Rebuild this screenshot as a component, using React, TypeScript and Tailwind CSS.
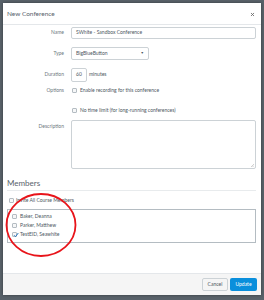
import { X } from "lucide-react";

const font = { fontFamily: "Lato, 'Open Sans', sans-serif" };

function Box({ checked = false }: { checked?: boolean }) {
  return (
    <span className="relative grid h-[5px] w-[5px] shrink-0 place-items-center rounded-[1px] border-[0.5px] border-[#b4bcc2] bg-[#f6f7f8]">
      {checked && (
        <svg viewBox="0 0 6 6" className="absolute -top-[1px] left-0 h-[6px] w-[6px]">
          <path d="M1 3.2 L2.5 4.7 L5.3 1" fill="none" stroke="#2a78bd" strokeWidth="1" />
        </svg>
      )}
    </span>
  );
}

function Row({ label, children, top }: { label: string; children: React.ReactNode; top?: boolean }) {
  return (
    <div className={`grid grid-cols-[61px_1fr] gap-x-[7px] ${top ? "items-start" : "items-center"}`}>
      <div className={`text-right text-[5px] text-[#6e7880] ${top ? "pt-[3px]" : ""}`}>{label}</div>
      <div className="flex items-center">{children}</div>
    </div>
  );
}

export default function App() {
  const members = [
    { name: "Baker, Deanna", checked: false },
    { name: "Parker, Matthew", checked: false },
    { name: "TestEID, Seawhite", checked: true },
  ];
  return (
    <div style={font} className="h-[300px] w-[264px] bg-[#59626a] px-[3px] pt-[3px]">
      <div className="relative flex h-[292px] flex-col bg-white shadow-[0_0_3px_rgba(0,0,0,0.4)]">
        <div className="flex h-[22px] items-center justify-between border-b border-[#e4e7ea] pl-[4px] pr-[6px] pt-[1px]">
          <span className="text-[6.5px] text-[#59636c]">New Conference</span>
          <X className="h-[5px] w-[5px] text-[#666]" strokeWidth={4} />
        </div>

        <div className="flex flex-1 flex-col pr-[5px] pt-[2px]">
          <Row label="Name">
            <div className="flex h-[12px] w-full items-center rounded-[2px] border-[0.5px] border-[#ccd2d6] px-[4px] text-[5px] text-[#4d5862]">
              SWhite - Sandbox Conference
            </div>
          </Row>
          <div className="mt-[8px]">
            <Row label="Type">
              <div className="flex h-[13px] w-[78px] items-center justify-between rounded-[2px] border-[0.5px] border-[#ccd2d6] px-[4px] text-[5px] text-[#4d5862]">
                <span>BigBlueButton</span>
                <span className="text-[3.5px]">▼</span>
              </div>
            </Row>
          </div>
          <div className="mt-[8px]">
            <Row label="Duration">
              <div className="flex h-[14px] w-[16px] items-center justify-center rounded-[2px] border-[0.5px] border-[#ccd2d6] text-[5px] text-[#4d5862]">
                60
              </div>
              <span className="ml-[2px] text-[5px] text-[#4d5862]">minutes</span>
            </Row>
          </div>
          <div className="mt-[5px]">
            <Row label="Options">
              <div className="flex items-center gap-[3px] pl-[1px] text-[5px] text-[#4d5862]">
                <Box />
                <span>Enable recording for this conference</span>
              </div>
            </Row>
          </div>
          <div className="mt-[12px]">
            <Row label="">
              <div className="flex items-center gap-[3px] pl-[1px] text-[5px] text-[#4d5862]">
                <Box />
                <span>No time limit (for long-running conferences)</span>
              </div>
            </Row>
          </div>
          <div className="mt-[6px]">
            <Row label="Description" top>
              <div className="relative h-[49px] w-full rounded-[2px] border-[0.5px] border-[#ccd2d6]">
                <svg viewBox="0 0 4 4" className="absolute bottom-[1px] right-[1px] h-[3px] w-[3px]">
                  <path d="M0 4 L4 0 M2 4 L4 2" stroke="#999" strokeWidth="0.6" />
                </svg>
              </div>
            </Row>
          </div>

          <div className="ml-[4px] mt-[9px]">
            <div className="border-b border-[#e8ebed] pb-[2px] text-[8px] leading-[10px] text-[#59636c]">
              Members
            </div>
            <div className="mt-[6px] flex items-center gap-[2px] pl-[2px] text-[5px] text-[#4d5862]">
              <Box />
              <span>Invite All Course Members</span>
            </div>
            <div className="mt-[4px] flex h-[34px] flex-col gap-[4px] border-[0.5px] border-[#b4bcc2] pl-[4px] pt-[4px]">
              {members.map((m) => (
                <div key={m.name} className="flex items-center gap-[3px] text-[5px] leading-[5px] text-[#4d5862]">
                  <Box checked={m.checked} />
                  <span>{m.name}</span>
                </div>
              ))}
            </div>
          </div>
        </div>

        <div className="flex h-[22px] items-center justify-end gap-[2px] border-t border-[#e4e7ea] bg-[#f5f5f5] pr-[4px]">
          <button className="h-[13px] w-[26px] rounded-[2px] border-[0.5px] border-[#ccd2d6] bg-[#f5f5f5] text-[5px] text-[#4d5862]">
            Cancel
          </button>
          <button className="h-[13px] w-[27px] rounded-[2px] bg-[#0a8fdc] text-[5px] text-white">
            Update
          </button>
        </div>

        <svg className="pointer-events-none absolute left-[2px] top-[190px] h-[64px] w-[72px]" viewBox="0 0 72 64">
          <ellipse cx="36" cy="32" rx="34.5" ry="31" fill="none" stroke="#e8141a" strokeWidth="1.8" />
        </svg>
      </div>
    </div>
  );
}
